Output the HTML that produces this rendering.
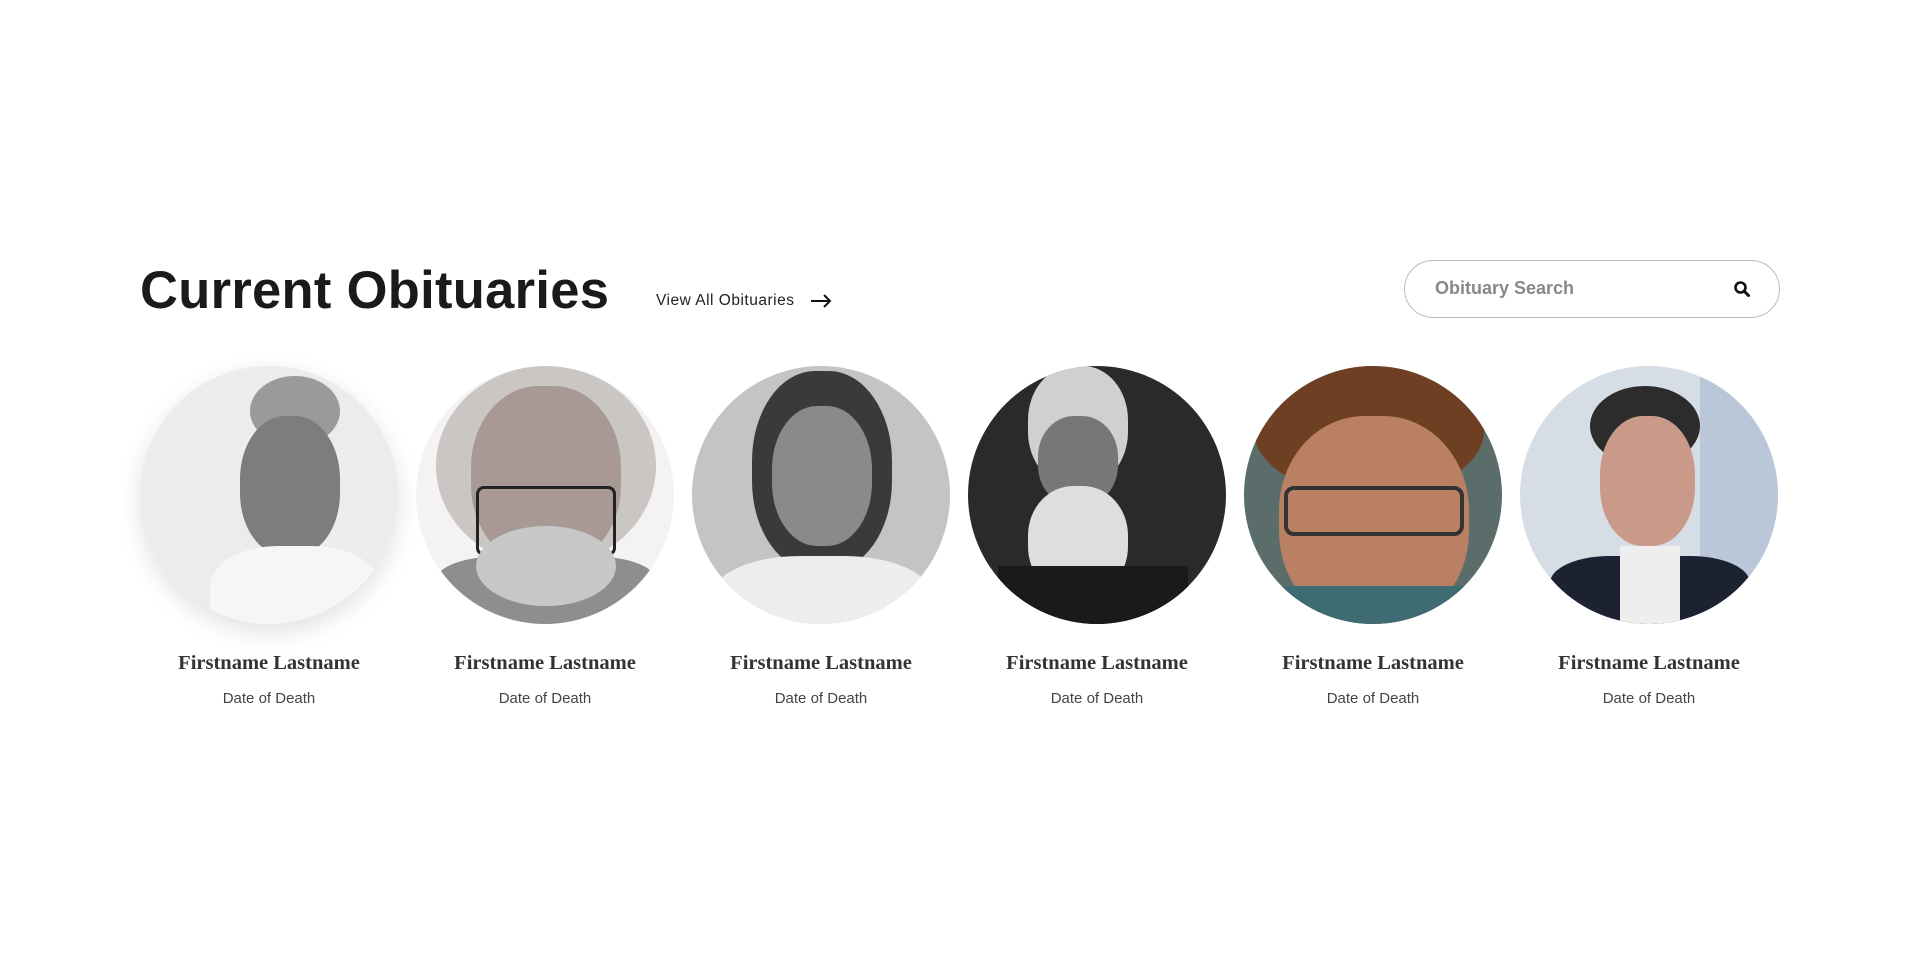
<!DOCTYPE html>
<html><head><meta charset="utf-8"><style>
html,body{margin:0;padding:0;background:#fff;width:1920px;height:966px;overflow:hidden;font-family:"Liberation Sans",sans-serif}
.title{position:absolute;left:140px;top:259px;font-size:52.5px;font-weight:bold;color:#1a1a1a;line-height:64px;letter-spacing:0.3px}
.view{position:absolute;left:656px;top:291px;font-size:15.5px;color:#222;line-height:20px;letter-spacing:0.5px}
.arrow{position:absolute;left:810px;top:293px}
.search{position:absolute;left:1404px;top:260px;width:374px;height:56px;border:1px solid #bbb;border-radius:30px}
.search span{position:absolute;left:30px;top:17px;font-size:18px;font-weight:bold;color:#888}
.search svg{position:absolute;left:328px;top:19px}
.card{position:absolute;top:366px;width:258px;text-align:center}
.ph{width:258px;height:258px;border-radius:50%;overflow:hidden;position:relative}
.nm{margin-top:26px;font-family:"Liberation Serif",serif;font-weight:bold;font-size:20.5px;color:#333;line-height:26px}
.dt{margin-top:13px;font-size:15px;color:#444;line-height:20px}
.ph div{position:absolute}
</style></head><body>
<div class="title">Current Obituaries</div>
<div class="view">View All Obituaries</div>
<svg class="arrow" width="22" height="16" viewBox="0 0 22 16"><path d="M1 8H20M14 2L20 8L14 14" fill="none" stroke="#111" stroke-width="2"/></svg>
<div class="search"><span>Obituary Search</span>
<svg width="18" height="18" viewBox="0 0 18 18"><circle cx="7.5" cy="7.5" r="5" fill="none" stroke="#111" stroke-width="2.6"/><path d="M11 11L15.5 15.5" stroke="#111" stroke-width="3" stroke-linecap="round"/></svg></div>

<div class="card" style="left:140px"><div class="ph" style="background:#ececec;box-shadow:0 8px 24px rgba(0,0,0,0.12)">
<div style="left:110px;top:10px;width:90px;height:70px;border-radius:50%;background:#9a9a9a"></div>
<div style="left:100px;top:50px;width:100px;height:140px;border-radius:45%;background:#7d7d7d"></div>
<div style="left:70px;top:180px;width:170px;height:100px;border-radius:40%;background:#f6f6f6"></div>
</div><div class="nm">Firstname Lastname</div><div class="dt">Date of Death</div></div>

<div class="card" style="left:416px"><div class="ph" style="background:#f4f2f2">
<div style="left:20px;top:0;width:220px;height:200px;border-radius:50%;background:#c9c6c4"></div>
<div style="left:55px;top:20px;width:150px;height:180px;border-radius:45%;background:#a89995"></div>
<div style="left:60px;top:120px;width:140px;height:70px;border:3px solid #222;border-radius:8px;box-sizing:border-box"></div>
<div style="left:20px;top:190px;width:220px;height:80px;background:#8e8e8e;border-radius:30%"></div>
<div style="left:60px;top:160px;width:140px;height:80px;border-radius:50%;background:#c8c8c8"></div>
</div><div class="nm">Firstname Lastname</div><div class="dt">Date of Death</div></div>

<div class="card" style="left:692px"><div class="ph" style="background:#c4c4c4">
<div style="left:60px;top:5px;width:140px;height:200px;border-radius:45%;background:#3a3a3a"></div>
<div style="left:80px;top:40px;width:100px;height:140px;border-radius:45%;background:#8a8a8a"></div>
<div style="left:20px;top:190px;width:220px;height:100px;border-radius:40%;background:#ededed"></div>
</div><div class="nm">Firstname Lastname</div><div class="dt">Date of Death</div></div>

<div class="card" style="left:968px"><div class="ph" style="background:#2a2a2a">
<div style="left:60px;top:0;width:100px;height:120px;border-radius:45%;background:#d0d0d0"></div>
<div style="left:70px;top:50px;width:80px;height:90px;border-radius:45%;background:#777"></div>
<div style="left:60px;top:120px;width:100px;height:110px;border-radius:45%;background:#dedede"></div>
<div style="left:30px;top:200px;width:190px;height:80px;background:#1a1a1a"></div>
</div><div class="nm">Firstname Lastname</div><div class="dt">Date of Death</div></div>

<div class="card" style="left:1244px"><div class="ph" style="background:#5b6d6a">
<div style="left:10px;top:0;width:230px;height:130px;border-radius:50%;background:#6e3f22"></div>
<div style="left:35px;top:50px;width:190px;height:210px;border-radius:45%;background:#b98064"></div>
<div style="left:40px;top:120px;width:180px;height:50px;border:4px solid #333;border-radius:10px;box-sizing:border-box"></div>
<div style="left:0;top:220px;width:258px;height:50px;background:#3f6b72"></div>
</div><div class="nm">Firstname Lastname</div><div class="dt">Date of Death</div></div>

<div class="card" style="left:1520px"><div class="ph" style="background:#d7dde5">
<div style="left:180px;top:0;width:78px;height:258px;background:#b9c7d8"></div>
<div style="left:70px;top:20px;width:110px;height:80px;border-radius:50%;background:#2c2c2c"></div>
<div style="left:80px;top:50px;width:95px;height:130px;border-radius:45%;background:#c99a8a"></div>
<div style="left:30px;top:190px;width:200px;height:90px;border-radius:30%;background:#1d2233"></div>
<div style="left:100px;top:180px;width:60px;height:80px;background:#eee"></div>
</div><div class="nm">Firstname Lastname</div><div class="dt">Date of Death</div></div>
</body></html>
